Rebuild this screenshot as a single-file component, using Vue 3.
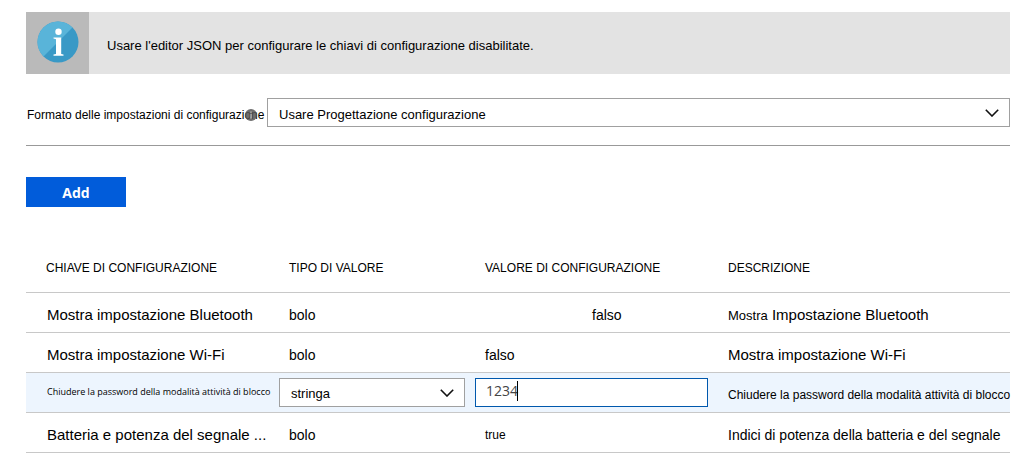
<script setup>
import { ref } from 'vue'

const format = ref('designer')
const valueType = ref('string')
const configValue = ref('1234')
</script>

<template>
  <main class="page">
    <section class="banner">
      <div class="banner-icon">
        <svg width="42" height="42" viewBox="0 0 42 42" aria-hidden="true">
          <circle cx="21" cy="21" r="20.5" fill="#3999c6" />
          <path d="M6.5 35.5A20.5 20.5 0 1 1 35.5 6.5Z" fill="#59b4d9" />
          <circle cx="21.5" cy="10.7" r="3.2" fill="#fff" />
          <path d="M16.5 16.4H24.2V33L26.5 33.6V34.8H16.5V33.6L19 33V18.2L16.5 17.6Z" fill="#fff" />
        </svg>
      </div>
      <p class="banner-text">Usare l'editor JSON per configurare le chiavi di configurazione disabilitate.</p>
    </section>

    <div class="format-row">
      <label class="format-label" for="format">
        Formato delle impostazioni di configurazione
        <svg class="hint" width="12" height="12" viewBox="0 0 12 12" aria-hidden="true">
          <circle cx="6" cy="6" r="6" fill="#555" />
          <path d="M5.2 2.4h1.6v1.4H5.2zM5.2 5h1.6v4.4H5.2z" fill="#aaa" />
        </svg>
      </label>
      <div class="select-wrap format-select">
        <select id="format" v-model="format" class="field">
          <option value="designer">Usare Progettazione configurazione</option>
        </select>
        <svg class="chevron" width="14" height="8" viewBox="0 0 14 8" aria-hidden="true">
          <path d="M.8 .8L7 7L13.2 .8" />
        </svg>
      </div>
    </div>

    <hr class="divider" />

    <button class="add" type="button">Add</button>

    <table class="grid">
      <colgroup>
        <col class="col-key" />
        <col class="col-type" />
        <col class="col-value" />
        <col />
      </colgroup>
      <thead>
        <tr>
          <th scope="col">CHIAVE DI CONFIGURAZIONE</th>
          <th scope="col">TIPO DI VALORE</th>
          <th scope="col">VALORE DI CONFIGURAZIONE</th>
          <th scope="col">DESCRIZIONE</th>
        </tr>
      </thead>
      <tbody>
        <tr>
          <td class="large">Mostra impostazione Bluetooth</td>
          <td>bolo</td>
          <td class="indented">falso</td>
          <td class="large"><span class="lead">Mostra</span> Impostazione Bluetooth</td>
        </tr>
        <tr>
          <td class="large">Mostra impostazione Wi-Fi</td>
          <td>bolo</td>
          <td>falso</td>
          <td class="large">Mostra impostazione Wi-Fi</td>
        </tr>
        <tr class="active">
          <td class="tiny">Chiudere la password della modalità attività di blocco</td>
          <td class="edit">
            <div class="select-wrap">
              <select v-model="valueType" class="field" aria-label="Tipo di valore">
                <option value="string">stringa</option>
              </select>
              <svg class="chevron" width="14" height="8" viewBox="0 0 14 8" aria-hidden="true">
                <path d="M.8 .8L7 7L13.2 .8" />
              </svg>
            </div>
          </td>
          <td class="edit">
            <div class="input-wrap">
              <input v-model="configValue" class="field value-input" type="text" aria-label="Valore di configurazione" />
              <span class="caret"></span>
            </div>
          </td>
          <td class="small">Chiudere la password della modalità attività di blocco</td>
        </tr>
        <tr>
          <td class="large">Batteria e potenza del segnale ...</td>
          <td>bolo</td>
          <td class="small">true</td>
          <td>Indici di potenza della batteria e del segnale</td>
        </tr>
      </tbody>
    </table>
  </main>
</template>

<style>
body {
  background: #fff;
}
</style>

<style scoped>
.page {
  padding: 12px 15px 0 26px;
  color: #000;
  font: 14px/20px "Liberation Sans", Arial, sans-serif;
}
.banner {
  display: flex;
  align-items: stretch;
  min-height: 62px;
  background: #e3e3e3;
}
.banner-icon {
  display: flex;
  justify-content: center;
  width: 63px;
  padding-top: 9px;
  box-sizing: border-box;
  background: #bababa;
}
.banner-text {
  align-self: center;
  margin: 6px 0 0 18px;
  font-size: 13px;
}
.format-row {
  display: flex;
  align-items: center;
  margin-top: 24px;
}
.format-label {
  position: relative;
  flex: 0 0 241px;
  padding: 4px 0 0 1px;
  box-sizing: border-box;
  font-size: 12px;
  white-space: nowrap;
}
.hint {
  position: absolute;
  right: 10px;
  top: 8px;
  opacity: 0.85;
}
.select-wrap,
.input-wrap {
  position: relative;
}
.format-select {
  flex: 1;
}
.field {
  display: block;
  width: 100%;
  height: 29px;
  margin: 0;
  padding: 4px 10px 0 11px;
  box-sizing: border-box;
  appearance: none;
  border: 1px solid #a0a0a0;
  border-radius: 0;
  outline: none;
  background: #fff;
  color: #000;
  font: 13px/20px "Liberation Sans", Arial, sans-serif;
}
.chevron {
  position: absolute;
  right: 11px;
  top: 11px;
  fill: none;
  stroke: #111;
  stroke-width: 1.6;
  pointer-events: none;
}
.divider {
  margin: 18px 0 0;
  border: 0;
  border-top: 1px solid #999;
}
.add {
  display: block;
  width: 100px;
  height: 30px;
  margin-top: 31px;
  padding: 2px 0 0;
  border: 0;
  background: #015cda;
  color: #fff;
  font: 700 14px/20px "Open Sans", "Noto Sans", sans-serif;
}
.grid {
  width: 100%;
  margin-top: 35px;
  border-collapse: collapse;
  table-layout: fixed;
}
.col-key {
  width: 253px;
}
.col-type {
  width: 196px;
}
.col-value {
  width: 243px;
}
th,
td {
  height: 40px;
  padding: 6px 0 0 10px;
  box-sizing: border-box;
  border-bottom: 1px solid #c8c8c8;
  text-align: left;
  white-space: nowrap;
}
th {
  height: 50px;
  padding-top: 2px;
  font-size: 12px;
  font-weight: 400;
}
th:first-child {
  padding-left: 20px;
}
td:first-child {
  padding-left: 21px;
}
.large {
  font-size: 15px;
}
.small {
  font-size: 12px;
}
.tiny {
  padding-top: 0;
  font-family: "Open Sans", "Noto Sans", sans-serif;
  font-size: 9px;
}
.lead {
  font-size: 13px;
}
td.indented {
  padding-left: 117px;
}
.active {
  background: #edf5fe;
}
.edit {
  padding: 0 10px 0 0;
}
.value-input {
  padding: 0 10px 4px;
  border-color: #0058ad;
  color: #444;
  font: 14px/20px "Open Sans", "Noto Sans", sans-serif;
  caret-color: transparent;
}
.caret {
  position: absolute;
  left: 42px;
  top: 3px;
  width: 1px;
  height: 20px;
  background: #000;
}
</style>
